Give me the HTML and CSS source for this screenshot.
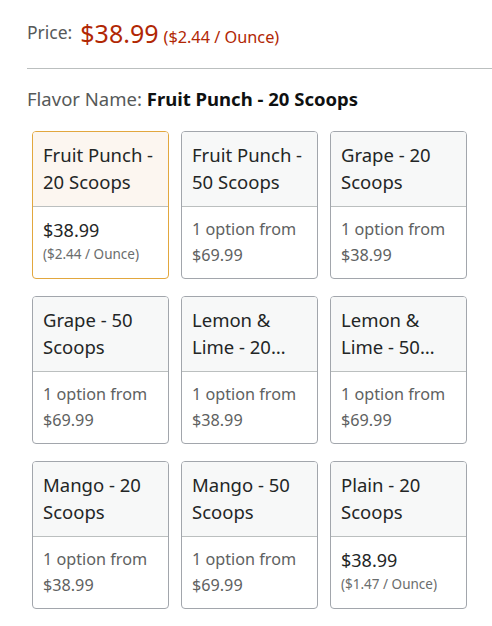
FILE: index.html
```html
<!DOCTYPE html>
<html>
<head>
<meta charset="utf-8">
<link rel="stylesheet" href="styles.css">
</head>
<body>
<div class="page">
  <div class="price-row">
    <span class="price-label">Price:</span>
    <span class="price-big">$38.99</span>
    <span class="price-unit">($2.44 / Ounce)</span>
  </div>
  <hr class="divider">
  <div class="flavor-row">
    <span class="flavor-label">Flavor Name:</span>
    <span class="flavor-value">Fruit Punch - 20 Scoops</span>
  </div>
  <div class="grid">
    <div class="card selected">
      <div class="card-title"><span>Fruit Punch - 20 Scoops</span></div>
      <div class="card-body"><div class="price">$38.99</div><div class="unit">($2.44 / Ounce)</div></div>
    </div>
    <div class="card">
      <div class="card-title"><span>Fruit Punch - 50 Scoops</span></div>
      <div class="card-body"><div class="opt">1 option from</div><div class="opt">$69.99</div></div>
    </div>
    <div class="card">
      <div class="card-title"><span>Grape - 20 Scoops</span></div>
      <div class="card-body"><div class="opt">1 option from</div><div class="opt">$38.99</div></div>
    </div>
    <div class="card">
      <div class="card-title"><span>Grape - 50 Scoops</span></div>
      <div class="card-body"><div class="opt">1 option from</div><div class="opt">$69.99</div></div>
    </div>
    <div class="card">
      <div class="card-title"><span>Lemon &amp; Lime - 20 Scoops</span></div>
      <div class="card-body"><div class="opt">1 option from</div><div class="opt">$38.99</div></div>
    </div>
    <div class="card">
      <div class="card-title"><span>Lemon &amp; Lime - 50 Scoops</span></div>
      <div class="card-body"><div class="opt">1 option from</div><div class="opt">$69.99</div></div>
    </div>
    <div class="card">
      <div class="card-title"><span>Mango - 20 Scoops</span></div>
      <div class="card-body"><div class="opt">1 option from</div><div class="opt">$38.99</div></div>
    </div>
    <div class="card">
      <div class="card-title"><span>Mango - 50 Scoops</span></div>
      <div class="card-body"><div class="opt">1 option from</div><div class="opt">$69.99</div></div>
    </div>
    <div class="card">
      <div class="card-title"><span>Plain - 20 Scoops</span></div>
      <div class="card-body"><div class="price">$38.99</div><div class="unit">($1.47 / Ounce)</div></div>
    </div>
  </div>
</div>
</body>
</html>
```
FILE: styles.css
```css
* { box-sizing: border-box; }
html, body { margin: 0; padding: 0; background: #fff; }
body { font-family: "Noto Sans", "Open Sans", sans-serif; color: #0f1111; }
.page { padding: 16px 0 0 27px; }
.price-row { display: flex; align-items: baseline; height: 36px; }
.price-label { font-size: 17.5px; color: #565959; margin-right: 8px; position: relative; top: -4px; }
.price-big { font-size: 25px; color: #b12704; margin-right: 5px; }
.price-unit { font-size: 16.3px; color: #b12704; }
.divider { border: 0; border-top: 1px solid #bbbfbf; margin: 16px 0 0 0; }
.flavor-row { margin-top: 17px; font-size: 18.5px; line-height: 26px; }
.flavor-label { color: #565959; }
.flavor-value { font-weight: 700; color: #0f1111; }
.grid { display: grid; grid-template-columns: repeat(3, 137px); column-gap: 12px; row-gap: 17px; margin: 19px 0 0 5px; }
.card { border: 1px solid #a2a6ac; border-radius: 4px; height: 148px; display: flex; flex-direction: column; overflow: hidden; }
.card.selected { border-color: #e2a73e; }
.card-title { background: #f7f8f8; height: 75px; flex: none; border-bottom: 1px solid #bbbfbf; padding: 9px 10px 0 10px; font-size: 18.5px; line-height: 27px; color: #232626; overflow: hidden; }
.card.selected .card-title { background: #fcf6f0; }
.card-title span { display: -webkit-box; -webkit-line-clamp: 2; -webkit-box-orient: vertical; overflow: hidden; max-height: 54px; }
.card-body { padding: 9px 10px 0 10px; }
.price { font-size: 18px; line-height: 28px; color: #232626; }
.unit { font-size: 13.5px; line-height: 20px; color: #6a6d6d; }
.opt { font-size: 16.2px; line-height: 26px; color: #5e6161; }
```
